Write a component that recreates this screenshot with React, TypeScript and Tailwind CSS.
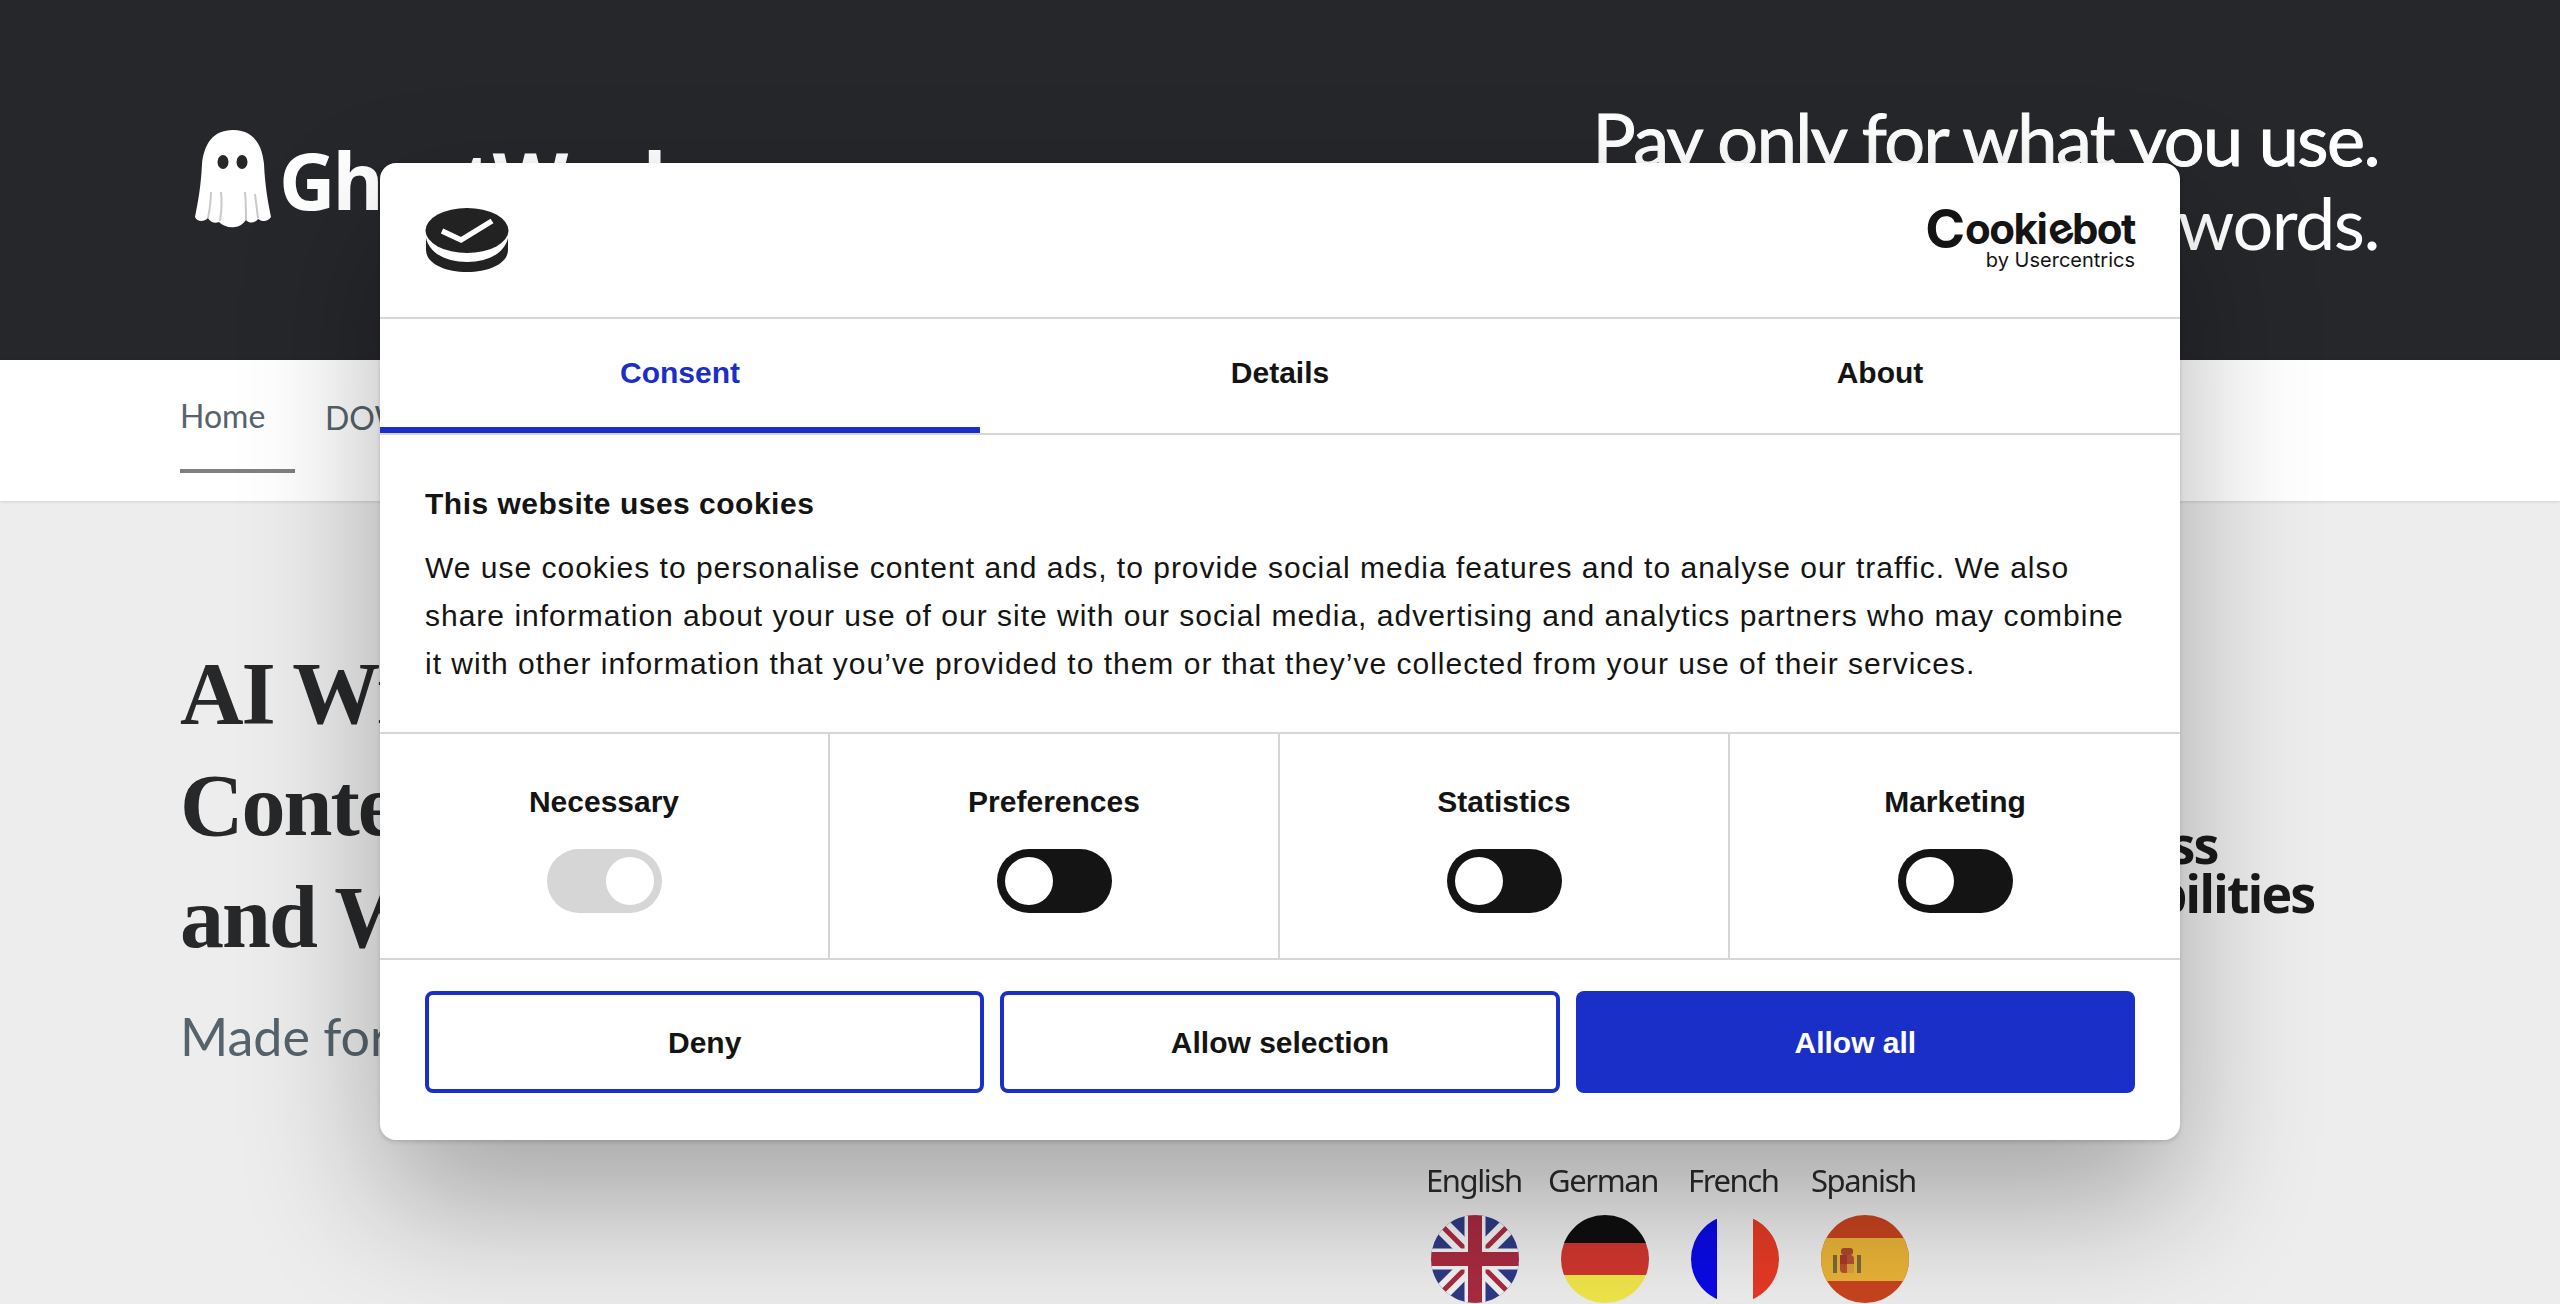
function Ghost() {
  return (
    <svg width="76" height="98" viewBox="0 0 76 98" className="shrink-0">
      <path d="M38 0C18 0 9 14 7 34C6 56 3 72 0 87C2 92 9 92 13 88C15 92 20 94 24 92C28 96 34 98 40 97C44 97 48 94 51 90C55 94 60 93 63 89C67 92 73 92 76 87C73 72 70 56 69 34C67 14 58 0 38 0Z" fill="#ffffff" />
      <path d="M13 88C15 78 16 70 16 62M25 91C27 80 27 72 26 62M51 90C51 80 51 72 50 62M63 88C62 80 61 72 60 64" stroke="#c9c9c9" strokeWidth="2" fill="none" />
      <ellipse cx="28" cy="32" rx="5.5" ry="7" fill="#26272b" />
      <ellipse cx="47" cy="32" rx="5.5" ry="7" fill="#26272b" />
    </svg>
  );
}

function Mark() {
  return (
    <svg width="84" height="64" viewBox="0 0 84 64">
      <path d="M1 30V42C1 55 19 64 42 64C65 64 83 55 83 42V30C79 46 62 54 42 54C22 54 5 46 1 30Z" fill="#222222" />
      <ellipse cx="42" cy="22.5" rx="41.5" ry="22.5" fill="#222222" />
      <path d="M17 23L36 32L67 13" stroke="#ffffff" strokeWidth="5.5" strokeLinejoin="miter" fill="none" />
    </svg>
  );
}

function Toggle({ kind }: { kind: "locked" | "off" }) {
  const track = kind === "locked" ? "bg-[#d6d6d6] justify-end" : "bg-[#141414] justify-start";
  return (
    <div className={`flex h-[64px] w-[115px] items-center rounded-full p-2 ${track}`}>
      <div className="h-[48px] w-[48px] rounded-full bg-white" />
    </div>
  );
}

function Flag({ code }: { code: string }) {
  return (
    <svg width="88" height="88" viewBox="0 0 88 88" className="shrink-0 blur-[0.4px]">
      <defs>
        <clipPath id={`c-${code}`}>
          <circle cx="44" cy="44" r="44" />
        </clipPath>
      </defs>
      <g clipPath={`url(#c-${code})`}>
        {code === "en" && (
          <>
            <rect width="88" height="88" fill="#2f3a85" />
            <path d="M0 0L88 88M88 0L0 88" stroke="#f3f3f3" strokeWidth="17" />
            <path d="M0 0L88 88M88 0L0 88" stroke="#a92b41" strokeWidth="5" />
            <path d="M44 0V88M0 44H88" stroke="#f3f3f3" strokeWidth="21" />
            <path d="M44 0V88M0 44H88" stroke="#a92b41" strokeWidth="14" />
          </>
        )}
        {code === "de" && (
          <>
            <rect width="88" height="28" fill="#0f0f0f" />
            <rect y="28" width="88" height="32" fill="#d0362e" />
            <rect y="60" width="88" height="28" fill="#f0e64a" />
          </>
        )}
        {code === "fr" && (
          <>
            <rect width="26" height="88" fill="#0a0ae6" />
            <rect x="26" width="36" height="88" fill="#eeeeee" />
            <rect x="62" width="26" height="88" fill="#e63a26" />
          </>
        )}
        {code === "es" && (
          <>
            <rect width="88" height="88" fill="#c8441f" />
            <rect y="23" width="88" height="43" fill="#eab337" />
            <rect x="19" y="40" width="14" height="18" rx="4" fill="#b5502f" />
            <rect x="19" y="40" width="7" height="9" fill="#a8382a" />
            <rect x="26" y="49" width="7" height="9" fill="#d9a03c" />
            <rect x="20" y="33" width="12" height="7" rx="3" fill="#a9472f" />
            <rect x="12" y="40" width="4" height="18" fill="#7a6a3a" />
            <rect x="36" y="40" width="4" height="18" fill="#7a6a3a" />
          </>
        )}
      </g>
    </svg>
  );
}

const langs = [
  { name: "English", code: "en", w: "w-[122px]" },
  { name: "German", code: "de", w: "w-[140px]" },
  { name: "French", code: "fr", w: "w-[123px]" },
  { name: "Spanish", code: "es", w: "w-[104px]" },
];

const cats: { name: string; kind: "locked" | "off" }[] = [
  { name: "Necessary", kind: "locked" },
  { name: "Preferences", kind: "off" },
  { name: "Statistics", kind: "off" },
  { name: "Marketing", kind: "off" },
];

export default function App() {
  return (
    <div className="relative h-[1304px] w-[2560px] overflow-hidden bg-[#ededed] font-['Lato',sans-serif]">
      <header className="flex h-[360px] items-start justify-between bg-[#26272b] pl-[195px] pr-[181px]">
        <div className="mt-[130px] flex items-start gap-[8px] blur-[0.5px]">
          <Ghost />
          <span className="font-['Open_Sans',sans-serif] text-[78px] font-bold leading-[100px] tracking-[-3px] text-white">
            GhostWorks
          </span>
        </div>
        <div className="mt-[96px] text-right text-[72px] leading-[84px] tracking-[-1.5px] text-white">
          <div className="[-webkit-text-stroke:1px_white]">Pay only for what you use.</div>
          <div>No cost for unused words.</div>
        </div>
      </header>

      <nav className="flex h-[141px] items-start gap-[30px] bg-white pl-[180px] shadow-[0_1px_3px_rgba(0,0,0,0.12)]">
        <div className="flex h-[113px] w-[115px] items-center border-b-4 border-[#808080] pt-[2px] text-[32px] text-[#56636c]">
          Home
        </div>
        <div className="flex h-[113px] items-center pt-[2px] text-[32px] text-[#56636c]">DOWNLOADS</div>
      </nav>

      <main className="flex items-start justify-between pl-[180px] pr-[246px] pt-[137px]">
        <div>
          <h1 className="font-['Liberation_Serif',serif] text-[88px] font-bold leading-[112px] tracking-[-2px] text-[#26282a]">
            AI Writer for
            <br />
            Content Teams
            <br />
            and Writers
          </h1>
          <p className="mt-[30px] text-[52px] leading-[64px] text-[#56636c]">Made for creators</p>
        </div>
        <div className="flex flex-col items-start">
          <div className="mt-[181px] font-['Open_Sans',sans-serif] text-[52px] font-bold leading-[49px] tracking-[-2px] text-[#1a1a1a] blur-[0.5px]">
            <div className="ml-[-100px]">Process</div>
            <div className="ml-[-100px]">Capabilities</div>
          </div>
        </div>
      </main>

      <section className="absolute left-[1426px] top-[1160px] flex flex-col gap-[15px]">
        <div className="flex font-['Noto_Sans',sans-serif] text-[31px] leading-[40px] tracking-[-1.4px] text-[#2b2b2b] blur-[0.4px]">
          {langs.map((l) => (
            <span key={l.code} className={l.w}>
              {l.name}
            </span>
          ))}
        </div>
        <div className="ml-[5px] flex gap-[42px]">
          {langs.map((l) => (
            <Flag key={l.code} code={l.code} />
          ))}
        </div>
      </section>

      <div className="absolute left-[380px] top-[163px] flex w-[1800px] flex-col overflow-hidden rounded-[16px] bg-white font-['Liberation_Sans',sans-serif] text-[#141414] shadow-[0_64px_136px_rgba(0,0,0,0.3),0_2px_4px_rgba(0,0,0,0.15)]">
        <div className="flex h-[156px] items-start justify-between border-b-2 border-[#d6d6d6] px-[45px] pt-[45px]">
          <Mark />
          <div className="flex flex-col items-end">
            <div className="flex h-[42px] items-center font-['Inter',sans-serif] font-bold text-[#141414]">
              <span className="text-[54px] leading-[42px]">C</span>
              <span className="text-[42px] leading-[42px] tracking-[-1.5px]">
                ooki<span className="mx-[1px] inline-block -rotate-[25deg]">e</span>bot
              </span>
            </div>
            <div className="font-['Inter',sans-serif] text-[20px] leading-[20px]">by Usercentrics</div>
          </div>
        </div>

        <div className="flex h-[116px] border-b-2 border-[#d6d6d6] text-[30px] font-bold">
          <div className="flex flex-1 items-center justify-center border-b-[6px] border-[#1a2fc8] pb-[2px] text-[#1a2fc8]">
            Consent
          </div>
          <div className="flex flex-1 items-center justify-center pb-[8px]">Details</div>
          <div className="flex flex-1 items-center justify-center pb-[8px]">About</div>
        </div>

        <div className="h-[299px] border-b-2 border-[#d6d6d6] px-[45px] pt-[49px]">
          <h2 className="text-[30px] font-bold leading-[40px] tracking-[0.5px]">This website uses cookies</h2>
          <p className="mt-[20px] text-[30px] leading-[48px] tracking-[1px]">
            We use cookies to personalise content and ads, to provide social media features and to analyse our traffic. We also share information about your use of our site with our social media, advertising and analytics partners who may combine it with other information that you’ve provided to them or that they’ve collected from your use of their services.
          </p>
        </div>

        <div className="grid h-[226px] grid-cols-4 border-b-2 border-[#d6d6d6]">
          {cats.map((c, i) => (
            <div key={c.name} className={`flex flex-col items-center pt-[48px] ${i < 3 ? "border-r-2 border-[#d6d6d6]" : ""}`}>
              <div className="text-[30px] font-bold leading-[40px]">{c.name}</div>
              <div className="mt-[27px]">
                <Toggle kind={c.kind} />
              </div>
            </div>
          ))}
        </div>

        <div className="grid grid-cols-3 gap-[16px] px-[45px] pb-[47px] pt-[31px] text-[30px] font-bold">
          <button className="h-[102px] rounded-[8px] border-4 border-[#1a2fc8] bg-white">Deny</button>
          <button className="h-[102px] rounded-[8px] border-4 border-[#1a2fc8] bg-white">Allow selection</button>
          <button className="h-[102px] rounded-[8px] bg-[#1a2fc8] text-white">Allow all</button>
        </div>
      </div>
    </div>
  );
}
